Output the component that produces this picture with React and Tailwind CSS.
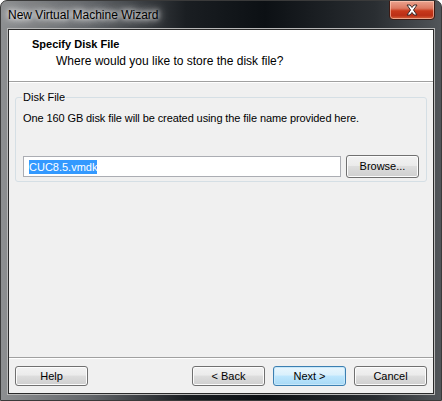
import React from "react";

function WinButton({ children, primary = false, className = "" }) {
  return (
    <div
      className={
        "flex items-center justify-center rounded-[3px] border text-[11px] text-black " +
        (primary
          ? "border-[#3c7fb1] bg-[linear-gradient(to_bottom,#eaf6fd_0%,#d9f0fc_45%,#bee6fd_50%,#a7d9f5_100%)] shadow-[inset_0_0_0_1px_#c7e8fa] "
          : "border-[#707070] bg-[linear-gradient(to_bottom,#f2f2f2_0%,#ebebeb_45%,#dddddd_50%,#cfcfcf_100%)] shadow-[inset_0_0_0_1px_#fcfcfc] ") +
        className
      }
    >
      {children}
    </div>
  );
}

export default function App() {
  return (
    <div
      className="relative flex h-[401px] w-[442px] flex-col overflow-hidden rounded-t-[7px] border border-[#3a3a3a] bg-[linear-gradient(to_right,#8d8f91_0%,#63666a_20%,#1a1e22_42%,#0c1014_60%,#2a2e32_85%,#52565a_100%)] font-['Liberation_Sans',Arial,sans-serif]"
    >
      {/* title bar */}
      <div className="flex h-[28px] shrink-0 items-start">
        <div className="pl-[7px] pt-[7px] text-[12px] leading-[15px] text-black [text-shadow:0_0_5px_#ffffff,0_0_9px_#ffffff,0_0_12px_rgba(255,255,255,0.8)]">
          New Virtual Machine Wizard
        </div>
        <div className="ml-auto mr-[6px] mt-[-1px] flex h-[20px] w-[46px] items-center justify-center rounded-b-[4px] border border-[#3b1a14] bg-[linear-gradient(to_bottom,#eba38f_0%,#dc7a62_40%,#c8391b_55%,#bb2f16_80%,#d4633c_100%)] shadow-[inset_0_0_0_1px_rgba(255,210,190,0.6)]">
          <svg width="14" height="12" viewBox="0 0 14 12">
            <path
              d="M2 1 L5 1 L7 3.5 L9 1 L12 1 L8.5 6 L12 11 L9 11 L7 8.5 L5 11 L2 11 L5.5 6 Z"
              fill="#ffffff"
              stroke="#3a2a28"
              strokeWidth="1"
              strokeLinejoin="round"
            />
          </svg>
        </div>
      </div>

      {/* client area */}
      <div className="mx-[7px] flex h-[365px] shrink-0 flex-col border border-[#2a2a2a] bg-[#f0f0f0] outline outline-1 outline-[#b8b8b8]">
        {/* header */}
        <div className="flex h-[51px] shrink-0 flex-col bg-white pl-[23px] pt-[7px]">
          <div className="text-[11px] font-bold leading-[15px] text-black">Specify Disk File</div>
          <div className="mt-[2px] pl-[24px] text-[12px] leading-[15px] text-black">
            Where would you like to store the disk file?
          </div>
        </div>
        <div className="h-px shrink-0 bg-[#a0a0a0]" />
        <div className="h-px shrink-0 bg-white" />

        {/* body */}
        <div className="flex flex-1 flex-col px-[6px] pt-[14px]">
          <div className="relative flex h-[85px] flex-col rounded-[3px] border border-[#d5dfe5] px-[7px]">
            <div className="absolute left-[6px] top-[-7px] bg-[#f0f0f0] px-px text-[11px] leading-[13px] text-black">
              Disk File
            </div>
            <div className="mt-[14px] text-[11px] leading-[13px] tracking-[-0.1px] text-black">
              One 160 GB disk file will be created using the file name provided here.
            </div>
            <div className="mt-[30px] flex items-center">
              <div className="flex h-[21px] w-[318px] items-center border border-[#abadb3] bg-white pl-[5px]">
                <span className="bg-[#3399ff] text-[11px] leading-[14px] text-white">CUC8.5.vmdk</span>
              </div>
              <WinButton className="ml-[5px] h-[23px] w-[73px]">Browse...</WinButton>
            </div>
          </div>
          <div className="flex-1" />
        </div>

        {/* footer */}
        <div className="h-px shrink-0 bg-[#a0a0a0]" />
        <div className="h-px shrink-0 bg-white" />
        <div className="flex h-[34px] shrink-0 items-start px-[6px] pt-[7px]">
          <WinButton className="h-[20px] w-[73px]">Help</WinButton>
          <div className="flex-1" />
          <WinButton className="h-[20px] w-[73px]">&lt; Back</WinButton>
          <WinButton primary className="ml-[8px] h-[20px] w-[73px]">Next &gt;</WinButton>
          <WinButton className="ml-[8px] h-[20px] w-[73px]">Cancel</WinButton>
        </div>
      </div>
    </div>
  );
}
